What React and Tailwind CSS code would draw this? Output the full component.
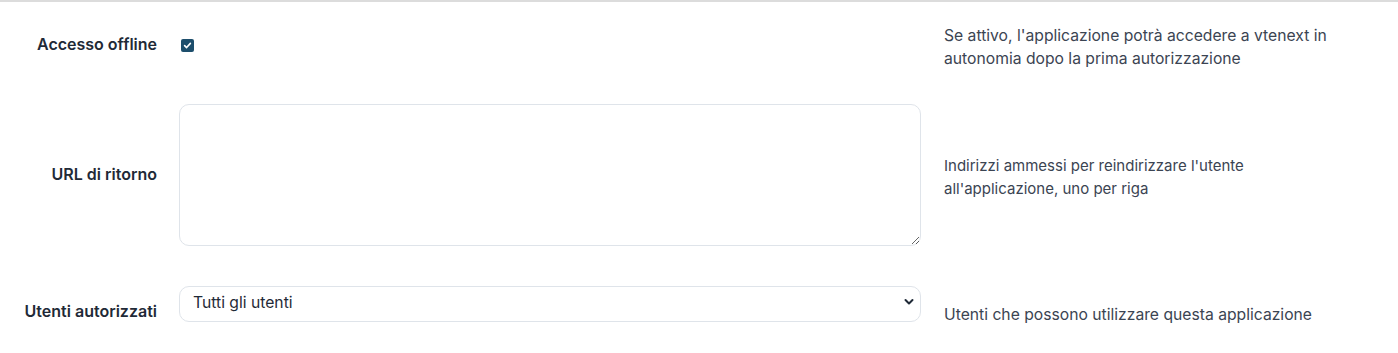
import React from "react";

export default function App() {
  return (
    <div className="w-[1398px] h-[353px] bg-white border-t-2 border-[#dcdcdc] font-['Inter',sans-serif] text-[15.7px]">
      {/* Row 1 */}
      <div className="flex items-center h-[86px]">
        <div className="w-[157px] text-right font-semibold text-[16px] leading-[22px] text-[#1f2a37] -mt-[2px]">Accesso offline</div>
        <div className="w-[741px] ml-[23px] flex items-center">
          <span className="w-[13px] h-[13px] ml-[1px] rounded-[2px] bg-[#1d4e6c] flex items-center justify-center">
            <svg width="9" height="9" viewBox="0 0 10 10">
              <path d="M1.8 5.2 L4 7.3 L8.2 2.6" fill="none" stroke="white" strokeWidth="1.8" strokeLinecap="round" strokeLinejoin="round" />
            </svg>
          </span>
        </div>
        <div className="ml-[23px] w-[420px] leading-[23px] text-[#3b4452] mt-[3px]">
          Se attivo, l'applicazione potrà accedere a vtenext in autonomia dopo la prima autorizzazione
        </div>
      </div>

      {/* Row 2 */}
      <div className="flex items-center pt-[16px] pb-[40px]">
        <div className="w-[157px] text-right font-semibold text-[16px] leading-[22px] text-[#1f2a37] -mt-[3px]">URL di ritorno</div>
        <div className="w-[742px] ml-[22px] flex">
          <textarea className="w-full h-[142px] rounded-[10px] border border-[#dfe4ea] outline-none px-3 py-2 text-[15px] block" />
        </div>
        <div className="ml-[23px] w-[340px] text-[15px] leading-[23px] text-[#3b4452] mt-[4px]">
          Indirizzi ammessi per reindirizzare l'utente all'applicazione, uno per riga
        </div>
      </div>

      {/* Row 3 */}
      <div className="flex items-start">
        <div className="w-[157px] text-right font-semibold text-[16px] leading-[22px] text-[#1f2a37] pt-[14px]">Utenti autorizzati</div>
        <div className="w-[742px] ml-[22px] relative">
          <div className="h-[36px] rounded-[10px] border border-[#dfe4ea] pl-[13px] pt-[5px] text-[#1f2a37] leading-[22px]">
            Tutti gli utenti
          </div>
          <svg className="absolute right-[7px] top-[12px]" width="10" height="8" viewBox="0 0 10 8">
            <path d="M1.5 2 L5 5.5 L8.5 2" fill="none" stroke="#1f2a37" strokeWidth="2" strokeLinecap="round" strokeLinejoin="round" />
          </svg>
        </div>
        <div className="ml-[23px] leading-[23px] text-[#3b4452] pt-[17px]">
          Utenti che possono utilizzare questa applicazione
        </div>
      </div>
    </div>
  );
}
